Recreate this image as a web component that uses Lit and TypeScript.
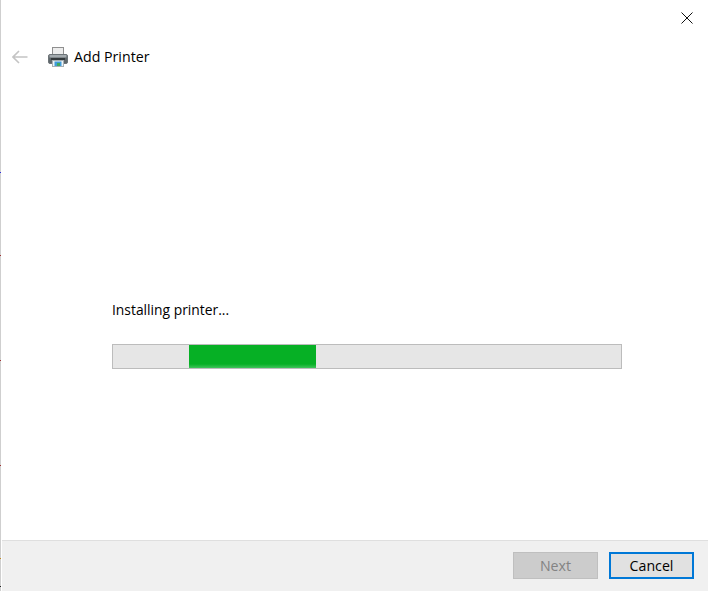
import { LitElement, html, css } from "lit";
import { customElement } from "lit/decorators.js";

const marks = [
  { top: 172, color: "#2a2ae0" },
  { top: 255, color: "#a03030" },
  { top: 360, color: "#a03030" },
  { top: 465, color: "#a03030" },
  { top: 558, color: "#c08a20" },
  { top: 586, color: "#222222" },
];

@customElement("app-root")
export class AppRoot extends LitElement {
  static styles = css`
    :host {
      display: block;
      width: 708px;
      height: 591px;
      overflow: hidden;
      font-family: "Open Sans", "Noto Sans", sans-serif;
      color: #000;
      background: #fff;
    }
    .window {
      position: relative;
      display: grid;
      grid-template-columns: 2px 1fr;
      height: 591px;
    }
    .rail {
      position: relative;
      background: linear-gradient(to right, #cfcfcf 0 1px, #fff 1px);
    }
    .mark {
      position: absolute;
      left: 0;
      width: 1px;
      height: 1px;
    }
    .main {
      display: flex;
      flex-direction: column;
      min-width: 0;
    }
    .titlebar {
      height: 36px;
      display: flex;
      justify-content: flex-end;
      align-items: flex-start;
      padding: 12px 15px 0 0;
      box-sizing: border-box;
    }
    .close {
      display: block;
      width: 12px;
      height: 12px;
    }
    .header {
      height: 42px;
      display: flex;
      align-items: center;
      padding-left: 10px;
    }
    .back {
      width: 16px;
      height: 14px;
      margin-right: 20px;
    }
    .printer {
      width: 20px;
      height: 20px;
      margin-right: 6px;
    }
    .title {
      font-size: 14.2px;
      line-height: 20px;
      color: #000;
    }
    .content {
      flex: 1;
      display: flex;
      flex-direction: column;
      padding: 222px 86px 0 110px;
    }
    .status {
      font-size: 13.85px;
      line-height: 20px;
      color: #000;
      margin-bottom: 24px;
    }
    .track {
      height: 25px;
      box-sizing: border-box;
      border: 1px solid #bcbcbc;
      background: #e6e6e6;
      padding-left: 76px;
    }
    .fill {
      width: 127px;
      height: 23px;
      background: linear-gradient(to bottom, #06b025 0 19px, #3fc45a 23px);
    }
    .footer {
      height: 51px;
      box-sizing: border-box;
      border-top: 1px solid #dfdfdf;
      background: #f0f0f0;
      display: flex;
      justify-content: flex-end;
      gap: 11px;
      padding: 11px 14px 0 0;
    }
    .btn {
      width: 85px;
      height: 27px;
      box-sizing: border-box;
      font: inherit;
      font-size: 14.2px;
      padding: 0;
      display: flex;
      align-items: center;
      justify-content: center;
    }
    .next {
      background: #cccccc;
      border: 1px solid #bfbfbf;
      color: #838383;
    }
    .cancel {
      background: #e1e1e1;
      border: 2px solid #0078d7;
      color: #000;
    }
  `;

  render() {
    return html`
      <div class="window">
        <div class="rail">
          ${marks.map(
            (m) =>
              html`<span class="mark" style="top:${m.top}px;background:${m.color}"></span>`
          )}
        </div>
        <div class="main">
          <div class="titlebar">
            <svg class="close" viewBox="0 0 12 12" fill="none" stroke="#111" stroke-width="1">
              <path d="M0.5 0.5L11.5 11.5M11.5 0.5L0.5 11.5" />
            </svg>
          </div>
          <div class="header">
            <svg class="back" viewBox="0 0 16 14" fill="none" stroke="#c4c4c4" stroke-width="1.6">
              <path d="M0.8 7H15.5M7 1L1 7L7 13" />
            </svg>
            <svg class="printer" viewBox="0 0 20 20">
              <rect x="4.5" y="0.5" width="11" height="8" fill="#ededed" stroke="#8f8f8f" />
              <rect x="0.5" y="7.5" width="19" height="9" rx="1.5" fill="#5f676b" stroke="#6d7478" />
              <rect x="1.5" y="8" width="17" height="2.5" fill="#a3aaae" />
              <rect x="3" y="11" width="14" height="2" fill="#33393c" />
              <rect x="4.5" y="13.5" width="11" height="6" fill="#eef4f8" stroke="#a8b0b4" />
              <rect x="6.5" y="14.5" width="7" height="4.5" fill="#3f9bd8" />
              <rect x="9" y="16" width="3" height="3" fill="#3fa860" />
            </svg>
            <div class="title">Add Printer</div>
          </div>
          <div class="content">
            <div class="status">Installing printer...</div>
            <div class="track"><div class="fill"></div></div>
          </div>
          <div class="footer">
            <div class="btn next">Next</div>
            <div class="btn cancel">Cancel</div>
          </div>
        </div>
      </div>
    `;
  }
}
